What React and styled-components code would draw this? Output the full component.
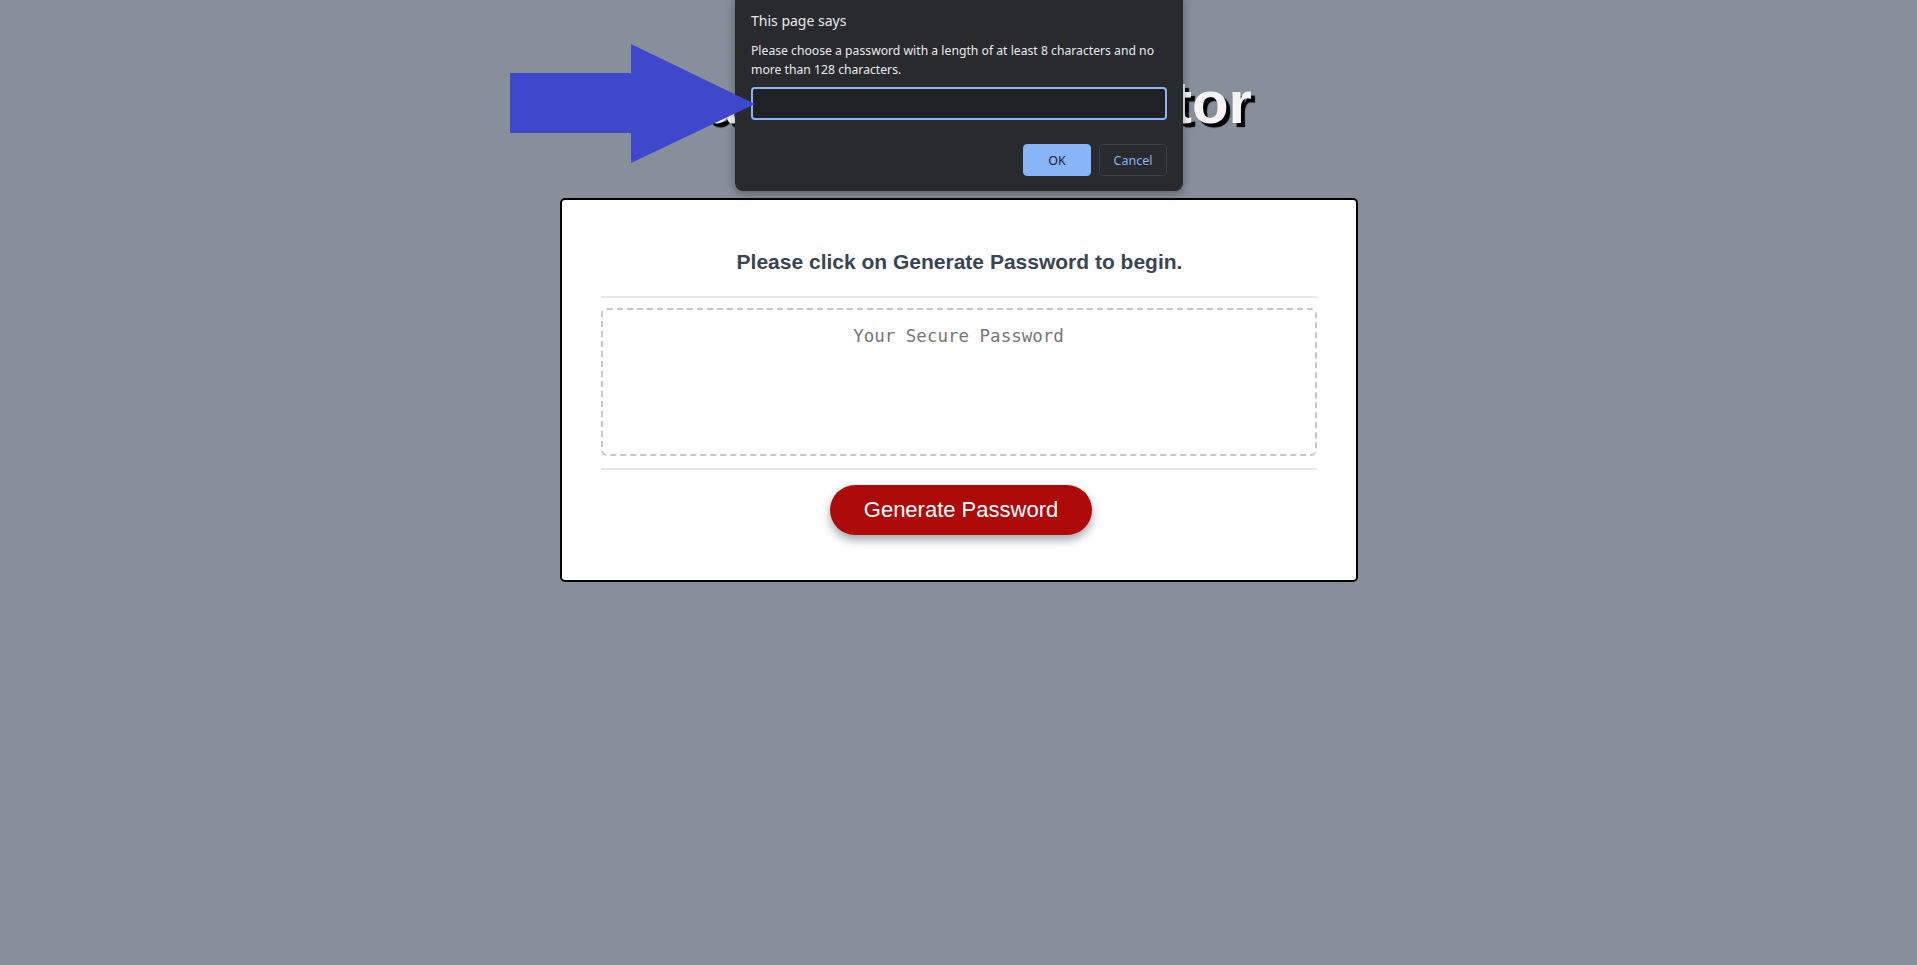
import React from "react";
import styled, { createGlobalStyle } from "styled-components";

const GlobalStyle = createGlobalStyle`
  html, body {
    margin: 0;
    padding: 0;
  }

  body {
    background: #868f9a;
    font-family: "Liberation Sans", Arial, sans-serif;
    min-height: 965px;
  }
`;

const Page = styled.div`
  position: relative;
  min-height: 965px;
  overflow: hidden;
`;

const Header = styled.header`
  padding-top: 68px;
  text-align: center;
`;

const Title = styled.h1`
  margin: 0;
  font-size: 60px;
  line-height: 69px;
  font-weight: 700;
  color: #f4f4f4;
  text-shadow: 4px 4px 1px #000;
`;

const Card = styled.section`
  box-sizing: border-box;
  width: 798px;
  margin: 61px auto 0;
  padding: 50px 39px 45px;
  background: #fff;
  border: 2px solid #000;
  border-radius: 5px;
`;

const CardTitle = styled.h2`
  margin: 0;
  padding-left: 2px;
  text-align: center;
  font-size: 21px;
  line-height: 24px;
  font-weight: 700;
  color: #3a4552;
`;

const Divider = styled.hr`
  border: 0;
  height: 2px;
  background: #e6e8eb;
  margin: ${props => props.$spacing};
`;

const PasswordArea = styled.textarea`
  display: block;
  box-sizing: border-box;
  width: 100%;
  height: 148px;
  padding: 16px;
  border: 2px dashed #c3c7ce;
  border-radius: 6px;
  resize: none;
  outline: none;
  text-align: center;
  font-family: "DejaVu Sans Mono", "Liberation Mono", monospace;
  font-size: 17.5px;
  line-height: 20px;
  color: #333;

  &::placeholder {
    color: #777;
  }
`;

const ButtonRow = styled.div`
  display: flex;
  justify-content: center;
  padding-left: 5px;
`;

const GenerateButton = styled.button`
  height: 50px;
  width: 262px;
  border: 0;
  border-radius: 25px;
  background: #af0a0a;
  color: #fff;
  font-family: "Liberation Sans", Arial, sans-serif;
  font-size: 22px;
  box-shadow: 0 5px 10px 0 rgba(50, 60, 80, 0.45);
  cursor: pointer;
`;

/* browser prompt that sits on top of the page */
const Dialog = styled.div`
  position: absolute;
  top: -8px;
  left: 50%;
  margin-left: -223.5px;
  width: 448px;
  box-sizing: border-box;
  padding: 19px 16px 15px;
  background: #292a2d;
  border-radius: 8px;
  box-shadow: 0 2px 8px rgba(0, 0, 0, 0.35);
  font-family: "Noto Sans", "Open Sans", sans-serif;
  display: flex;
  flex-direction: column;
`;

const DialogTitle = styled.div`
  font-size: 14px;
  line-height: 20px;
  color: #e8eaed;
`;

const DialogMessage = styled.div`
  margin-top: 10px;
  font-size: 12.2px;
  line-height: 19px;
  color: #e8eaed;
`;

const PromptInput = styled.input`
  box-sizing: border-box;
  margin-top: 8px;
  height: 33px;
  width: 100%;
  background: #202124;
  border: 2px solid #8ab4f8;
  border-radius: 4px;
  outline: none;
  color: #e8eaed;
`;

const DialogActions = styled.div`
  margin-top: 24px;
  display: flex;
  justify-content: flex-end;
  gap: 8px;
`;

const DialogButton = styled.button`
  box-sizing: border-box;
  width: 68px;
  height: 32px;
  border-radius: 4px;
  font-family: "Noto Sans", "Open Sans", sans-serif;
  font-size: 12.5px;
  background: ${props => (props.$primary ? "#8ab4f8" : "transparent")};
  color: ${props => (props.$primary ? "#202124" : "#8ab4f8")};
  border: 1px solid ${props => (props.$primary ? "#8ab4f8" : "#3c4043")};
`;

const Arrow = styled.svg`
  position: absolute;
  top: 44px;
  left: calc(50% - 448.5px);
  width: 246px;
  height: 120px;
`;

const App = () => {
  return (
    <Page>
      <GlobalStyle />
      <Header>
        <Title>Password Generator</Title>
      </Header>

      <Card>
        <CardTitle>Please click on Generate Password to begin.</CardTitle>
        <Divider $spacing="22px 0 10px" />
        <PasswordArea readOnly placeholder="Your Secure Password" />
        <Divider $spacing="12px 0 15px" />
        <ButtonRow>
          <GenerateButton>Generate Password</GenerateButton>
        </ButtonRow>
      </Card>

      <Dialog>
        <DialogTitle>This page says</DialogTitle>
        <DialogMessage>
          Please choose a password with a length of at least 8 characters and no
          more than 128 characters.
        </DialogMessage>
        <PromptInput />
        <DialogActions>
          <DialogButton $primary>OK</DialogButton>
          <DialogButton>Cancel</DialogButton>
        </DialogActions>
      </Dialog>

      <Arrow viewBox="0 0 246 120">
        <polygon
          points="0,29 121,29 121,0 245,60 121,119 121,89 0,89"
          fill="#3f48cc"
        />
      </Arrow>
    </Page>
  );
};

export default App;
